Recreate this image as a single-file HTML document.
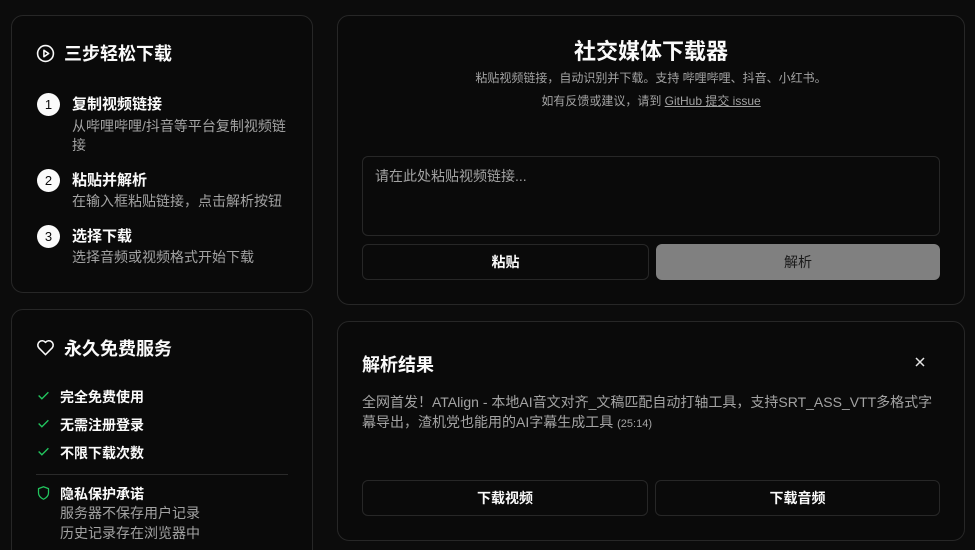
<!DOCTYPE html>
<html><head><meta charset="utf-8"><style>
*{box-sizing:border-box;margin:0;padding:0}
html,body{width:975px;height:550px;overflow:hidden}
body{background:#0c0c0c;font-family:"Liberation Sans","Noto Sans CJK SC",sans-serif;color:#fafafa;position:relative}
.card{position:absolute;background:#0a0a0a;border:1px solid #272727;border-radius:12px}
.abs{position:absolute;white-space:nowrap}
.h{font-size:18px;font-weight:bold}
.num{position:absolute;left:37px;width:23px;height:23px;border-radius:50%;background:#fafafa;color:#0a0a0a;font-size:13px;text-align:center;line-height:23px}
.st{font-size:15px;font-weight:bold}
.sd{font-size:14px;color:#a3a3a3;line-height:19px}
.btn{position:absolute;border:1px solid #272727;border-radius:6px;background:#0a0a0a;font-size:14px;font-weight:bold;text-align:center}
.chk{font-size:14px;font-weight:bold}
</style></head><body>
<div class="card" style="left:11px;top:15px;width:302px;height:278px"></div>
<svg class="abs" style="left:36px;top:44px" width="19" height="19" viewBox="0 0 24 24" fill="none" stroke="#fafafa" stroke-width="2" stroke-linecap="round" stroke-linejoin="round"><circle cx="12" cy="12" r="10"/><polygon points="10,8 16,12 10,16"/></svg>
<div class="abs h" style="left:64px;top:40px">三步轻松下载</div>
<div class="num" style="top:93px">1</div>
<div class="abs st" style="left:72px;top:93px">复制视频链接</div>
<div class="abs sd" style="left:72px;top:117px">从哔哩哔哩/抖音等平台复制视频链<br>接</div>
<div class="num" style="top:169px">2</div>
<div class="abs st" style="left:72px;top:169px">粘贴并解析</div>
<div class="abs sd" style="left:72px;top:192px">在输入框粘贴链接，点击解析按钮</div>
<div class="num" style="top:225px">3</div>
<div class="abs st" style="left:72px;top:225px">选择下载</div>
<div class="abs sd" style="left:72px;top:248px">选择音频或视频格式开始下载</div>

<div class="card" style="left:11px;top:309px;width:302px;height:260px"></div>
<svg class="abs" style="left:36px;top:338px" width="19" height="19" viewBox="0 0 24 24" fill="none" stroke="#fafafa" stroke-width="2" stroke-linejoin="round"><path d="M12 21l-8.5-8.6A5 5 0 0 1 12 5.5a5 5 0 0 1 8.5 6.9z"/></svg>
<div class="abs h" style="left:64px;top:335px">永久免费服务</div>
<svg class="abs" style="left:37px;top:389px" width="13" height="13" viewBox="0 0 24 24" fill="none" stroke="#22c55e" stroke-width="2.5"><path d="M3 12l6 6L21 6"/></svg>
<div class="abs chk" style="left:60px;top:387px">完全免费使用</div>
<svg class="abs" style="left:37px;top:417px" width="13" height="13" viewBox="0 0 24 24" fill="none" stroke="#22c55e" stroke-width="2.5"><path d="M3 12l6 6L21 6"/></svg>
<div class="abs chk" style="left:60px;top:415px">无需注册登录</div>
<svg class="abs" style="left:37px;top:445px" width="13" height="13" viewBox="0 0 24 24" fill="none" stroke="#22c55e" stroke-width="2.5"><path d="M3 12l6 6L21 6"/></svg>
<div class="abs chk" style="left:60px;top:443px">不限下载次数</div>
<div class="abs" style="left:36px;top:474px;width:252px;height:1px;background:#2a2a2a"></div>
<svg class="abs" style="left:36px;top:485px" width="15" height="16" viewBox="0 0 24 24" fill="none" stroke="#22c55e" stroke-width="2" stroke-linejoin="round"><path d="M12 2l8 3v7c0 5-4 8-8 10-4-2-8-5-8-10V5z"/></svg>
<div class="abs chk" style="left:60px;top:484px">隐私保护承诺</div>
<div class="abs sd" style="left:60px;top:503px;line-height:20px">服务器不保存用户记录<br>历史记录存在浏览器中</div>

<div class="card" style="left:337px;top:15px;width:628px;height:290px"></div>
<div class="abs" style="left:337px;width:628px;top:34px;text-align:center;font-size:22px;font-weight:bold">社交媒体下载器</div>
<div class="abs" style="left:337px;width:628px;top:69px;text-align:center;font-size:12px;color:#a3a3a3">粘贴视频链接，自动识别并下载。支持 哔哩哔哩、抖音、小红书。</div>
<div class="abs" style="left:337px;width:628px;top:92px;text-align:center;font-size:12px;color:#a3a3a3">如有反馈或建议，请到 <span style="text-decoration:underline">GitHub 提交 issue</span></div>
<div class="abs" style="left:362px;top:156px;width:578px;height:80px;border:1px solid #272727;border-radius:6px"></div>
<div class="abs" style="left:375px;top:166px;font-size:14px;color:#a3a3a3">请在此处粘贴视频链接...</div>
<div class="btn" style="left:362px;top:244px;width:287px;height:36px;line-height:34px">粘贴</div>
<div class="btn" style="left:656px;top:244px;width:284px;height:36px;line-height:36px;background:#808080;border:none;color:#1a1a1a;font-weight:normal">解析</div>

<div class="card" style="left:337px;top:321px;width:628px;height:220px"></div>
<div class="abs h" style="left:362px;top:351px">解析结果</div>
<svg class="abs" style="left:914px;top:356px" width="12" height="12" viewBox="0 0 12 12" stroke="#e5e5e5" stroke-width="1.5"><path d="M2 2l8 8M10 2l-8 8"/></svg>
<div class="abs sd" style="left:362px;top:392px;width:578px;white-space:normal;line-height:20px">全网首发！ATAlign - 本地AI音文对齐_文稿匹配自动打轴工具，支持SRT_ASS_VTT多格式字幕导出，渣机党也能用的AI字幕生成工具 <span style="font-size:11px">(25:14)</span></div>
<div class="btn" style="left:362px;top:480px;width:286px;height:36px;line-height:34px">下载视频</div>
<div class="btn" style="left:655px;top:480px;width:285px;height:36px;line-height:34px">下载音频</div>
</body></html>
